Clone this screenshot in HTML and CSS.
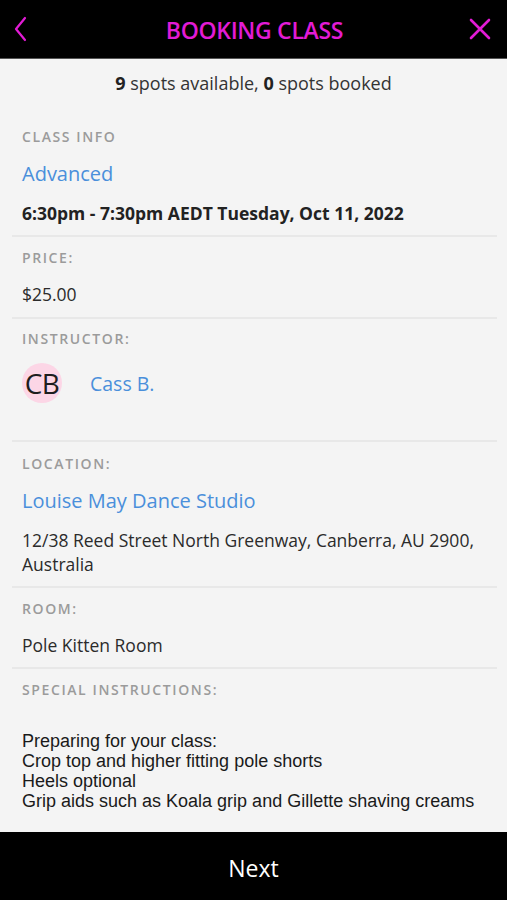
FILE: index.html
```html
<!DOCTYPE html>
<html lang="en">
<head>
<meta charset="utf-8">
<title>Booking Class</title>
<link rel="stylesheet" href="styles.css">
</head>
<body>
<div class="app">
  <header class="topbar">
    <button class="icon-btn back" aria-label="Back">
      <svg width="16" height="26" viewBox="0 0 16 26"><path d="M12 2 L3 13 L12 24" fill="none" stroke="#e21bd5" stroke-width="2.2" stroke-linecap="round" stroke-linejoin="round"/></svg>
    </button>
    <h1 class="title">BOOKING CLASS</h1>
    <button class="icon-btn close" aria-label="Close">
      <svg width="22" height="22" viewBox="0 0 22 22"><path d="M2 2 L20 20 M20 2 L2 20" fill="none" stroke="#e21bd5" stroke-width="2.6" stroke-linecap="round"/></svg>
    </button>
  </header>
  <main class="content">
    <p class="spots"><b>9</b> spots available, <b>0</b> spots booked</p>
    <section class="sec sec-class">
      <div class="label">CLASS INFO</div>
      <div class="link big">Advanced</div>
      <div class="date">6:30pm - 7:30pm AEDT Tuesday, Oct 11, 2022</div>
    </section>
    <section class="sec sec-price">
      <div class="label">PRICE:</div>
      <div class="text">$25.00</div>
    </section>
    <section class="sec sec-instr">
      <div class="label">INSTRUCTOR:</div>
      <div class="instructor">
        <span class="avatar">CB</span>
        <span class="link name">Cass B.</span>
      </div>
    </section>
    <section class="sec sec-loc">
      <div class="label">LOCATION:</div>
      <div class="link big">Louise May Dance Studio</div>
      <div class="text addr">12/38 Reed Street North Greenway, Canberra, AU 2900, Australia</div>
    </section>
    <section class="sec sec-room">
      <div class="label">ROOM:</div>
      <div class="text">Pole Kitten Room</div>
    </section>
    <section class="sec sec-special">
      <div class="label">SPECIAL INSTRUCTIONS:</div>
      <div class="instructions">Preparing for your class:<br>Crop top and higher fitting pole shorts<br>Heels optional<br>Grip aids such as Koala grip and Gillette shaving creams</div>
    </section>
  </main>
  <footer class="footer">Next</footer>
</div>
</body>
</html>
```
FILE: styles.css
```css
* { box-sizing: border-box; }
html, body { margin: 0; padding: 0; }
body {
  font-family: "Open Sans", "Noto Sans", sans-serif;
  background: #f4f4f4;
  color: #2b2b2b;
}
.app {
  height: 900px;
  display: flex;
  flex-direction: column;
}
.topbar {
  height: 59px;
  background: #000;
  display: grid;
  grid-template-columns: 1fr auto 1fr;
  align-items: center;
  padding: 0 15px 0 9px;
  border-bottom: 1px solid #555;
}
.icon-btn {
  background: none;
  border: 0;
  padding: 0;
  display: flex;
  align-items: center;
  width: 24px;
  justify-content: center;
}
.back { justify-self: start; }
.close { justify-self: end; }
.title {
  margin: 0;
  font-size: 23px;
  font-weight: 600;
  color: #e21bd5;
  letter-spacing: -0.3px;
  line-height: 30px;
  padding-top: 2px;
  padding-left: 8px;
}
.content {
  flex: 1;
  overflow: hidden;
}
.spots {
  margin: 0;
  padding-top: 12px;
  text-align: center;
  font-size: 18px;
  line-height: 24px;
  color: #333;
}
.spots b { font-weight: 700; color: #222; }
.sec {
  margin: 0 10px 0 12px;
  padding: 11px 10px 10px;
  border-bottom: 2px solid #e8e8e8;
}
.label {
  font-size: 14px;
  line-height: 20px;
  font-weight: 600;
  letter-spacing: 1.6px;
  color: #9b9b9b;
}
.link { color: #4a8fdb; }
.big {
  font-size: 20px;
  line-height: 26px;
  margin-top: 14px;
}
.date {
  margin-top: 14px;
  font-size: 17.5px;
  line-height: 24px;
  font-weight: 700;
  color: #222;
}
.text {
  margin-top: 14px;
  font-size: 17.5px;
  line-height: 24px;
  color: #2b2b2b;
}
.sec-class { padding-top: 32px; }
.sec-price { padding-bottom: 11px; }
.sec-instr { padding-top: 10px; padding-bottom: 37px; }
.sec-loc { padding-top: 12px; }
.instructor {
  margin-top: 14px;
  display: flex;
  align-items: center;
  gap: 28px;
  height: 40px;
}
.avatar {
  width: 40px;
  height: 40px;
  border-radius: 50%;
  background: #fcd6e6;
  display: flex;
  align-items: center;
  justify-content: center;
  font-size: 28px;
  color: #1e1e1e;
  letter-spacing: -0.5px;
}
.name { font-size: 19.5px; }
.sec-special { border-bottom: 0; }
.instructions {
  margin-top: 31px;
  font-family: "Liberation Sans", Arial, sans-serif;
  font-size: 18px;
  line-height: 20px;
  color: #1a1a1a;
}
.footer {
  height: 68px;
  background: #000;
  color: #fff;
  display: flex;
  align-items: center;
  justify-content: center;
  font-size: 23px;
  padding-top: 3px;
}
```
